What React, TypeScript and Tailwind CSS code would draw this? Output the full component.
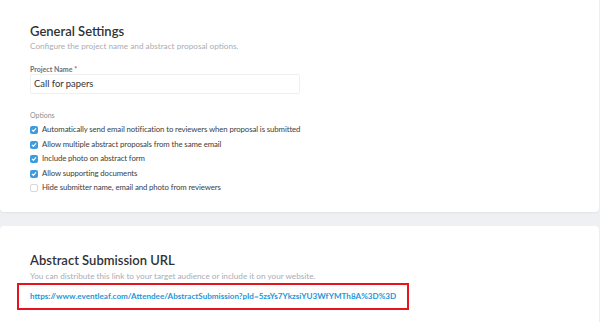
import React from 'react';

const options = [
  { label: 'Automatically send email notification to reviewers when proposal is submitted', checked: true },
  { label: 'Allow multiple abstract proposals from the same email', checked: true },
  { label: 'Include photo on abstract form', checked: true },
  { label: 'Allow supporting documents', checked: true },
  { label: 'Hide submitter name, email and photo from reviewers', checked: false },
];

function Box({ checked }: { checked: boolean }) {
  if (!checked) {
    return <span className="w-[8px] h-[8px] rounded-[2px] border border-[#d4d7dc] bg-white shrink-0" />;
  }
  return (
    <span className="w-[8px] h-[8px] rounded-[2px] bg-[#3f9be0] flex items-center justify-center shrink-0">
      <svg width="6" height="6" viewBox="0 0 10 10" fill="none">
        <path d="M2 5.2l2 2 4-4.4" stroke="#fff" strokeWidth="1.8" strokeLinecap="round" strokeLinejoin="round" />
      </svg>
    </span>
  );
}

export default function App() {
  return (
    <div className="w-[600px] h-[322px] overflow-hidden bg-[#eef0f4] text-[#333] font-['Lato',sans-serif]">
      {/* General settings */}
      <div className="w-[599px] h-[212px] bg-white rounded-b-[4px] shadow-[0_1px_2px_rgba(0,0,0,0.06)] pt-[23px] pl-[30px]">
        <h2 className="text-[13px] leading-[16px] font-semibold text-[#2f3337]">General Settings</h2>
        <p className="text-[8.2px] leading-[12px] text-[#a9adb5] mt-[1px]">Configure the project name and abstract proposal options.</p>

        <div className="mt-[12px] text-[7px] leading-[10px] font-bold text-[#6b7079]">
          Project Name <span className="text-[#e5484d]">*</span>
        </div>
        <div className="w-[270px] h-[20px] border border-[#eef0f2] rounded-[2px] flex items-center pl-[3px] text-[9.4px] text-[#2f3337]">
          Call for papers
        </div>

        <div className="mt-[16px] text-[7px] leading-[10px] text-[#8a8f97]">Options</div>
        <ul className="mt-[3px] flex flex-col">
          {options.map((o) => (
            <li key={o.label} className="h-[14.5px] flex items-center gap-[4px] text-[7.8px] tracking-[-0.1px] text-[#3a3e43]">
              <Box checked={o.checked} />
              <span>{o.label}</span>
            </li>
          ))}
        </ul>
      </div>

      {/* Submission URL */}
      <div className="mt-[14px] w-[599px] h-[110px] bg-white rounded-t-[4px] shadow-[0_1px_2px_rgba(0,0,0,0.06)] pt-[26px] pl-[17px]">
        <h2 className="pl-[13px] text-[13px] leading-[16px] font-semibold text-[#2f3337]">Abstract Submission URL</h2>
        <p className="pl-[13px] text-[8.2px] leading-[12px] text-[#a9adb5] mt-[2px]">
          You can distribute this link to your target audience or include it on your website.
        </p>
        <div className="mt-[1px] w-[392px] h-[27px] border-2 border-[#e8141c] flex items-center pl-[11px]">
          <span className="text-[8.1px] font-bold text-[#1f97d8] whitespace-nowrap">
            https://www.eventleaf.com/Attendee/AbstractSubmission?pId=5zsYs7YkzsiYU3WfYMTh8A%3D%3D
          </span>
        </div>
      </div>
    </div>
  );
}
